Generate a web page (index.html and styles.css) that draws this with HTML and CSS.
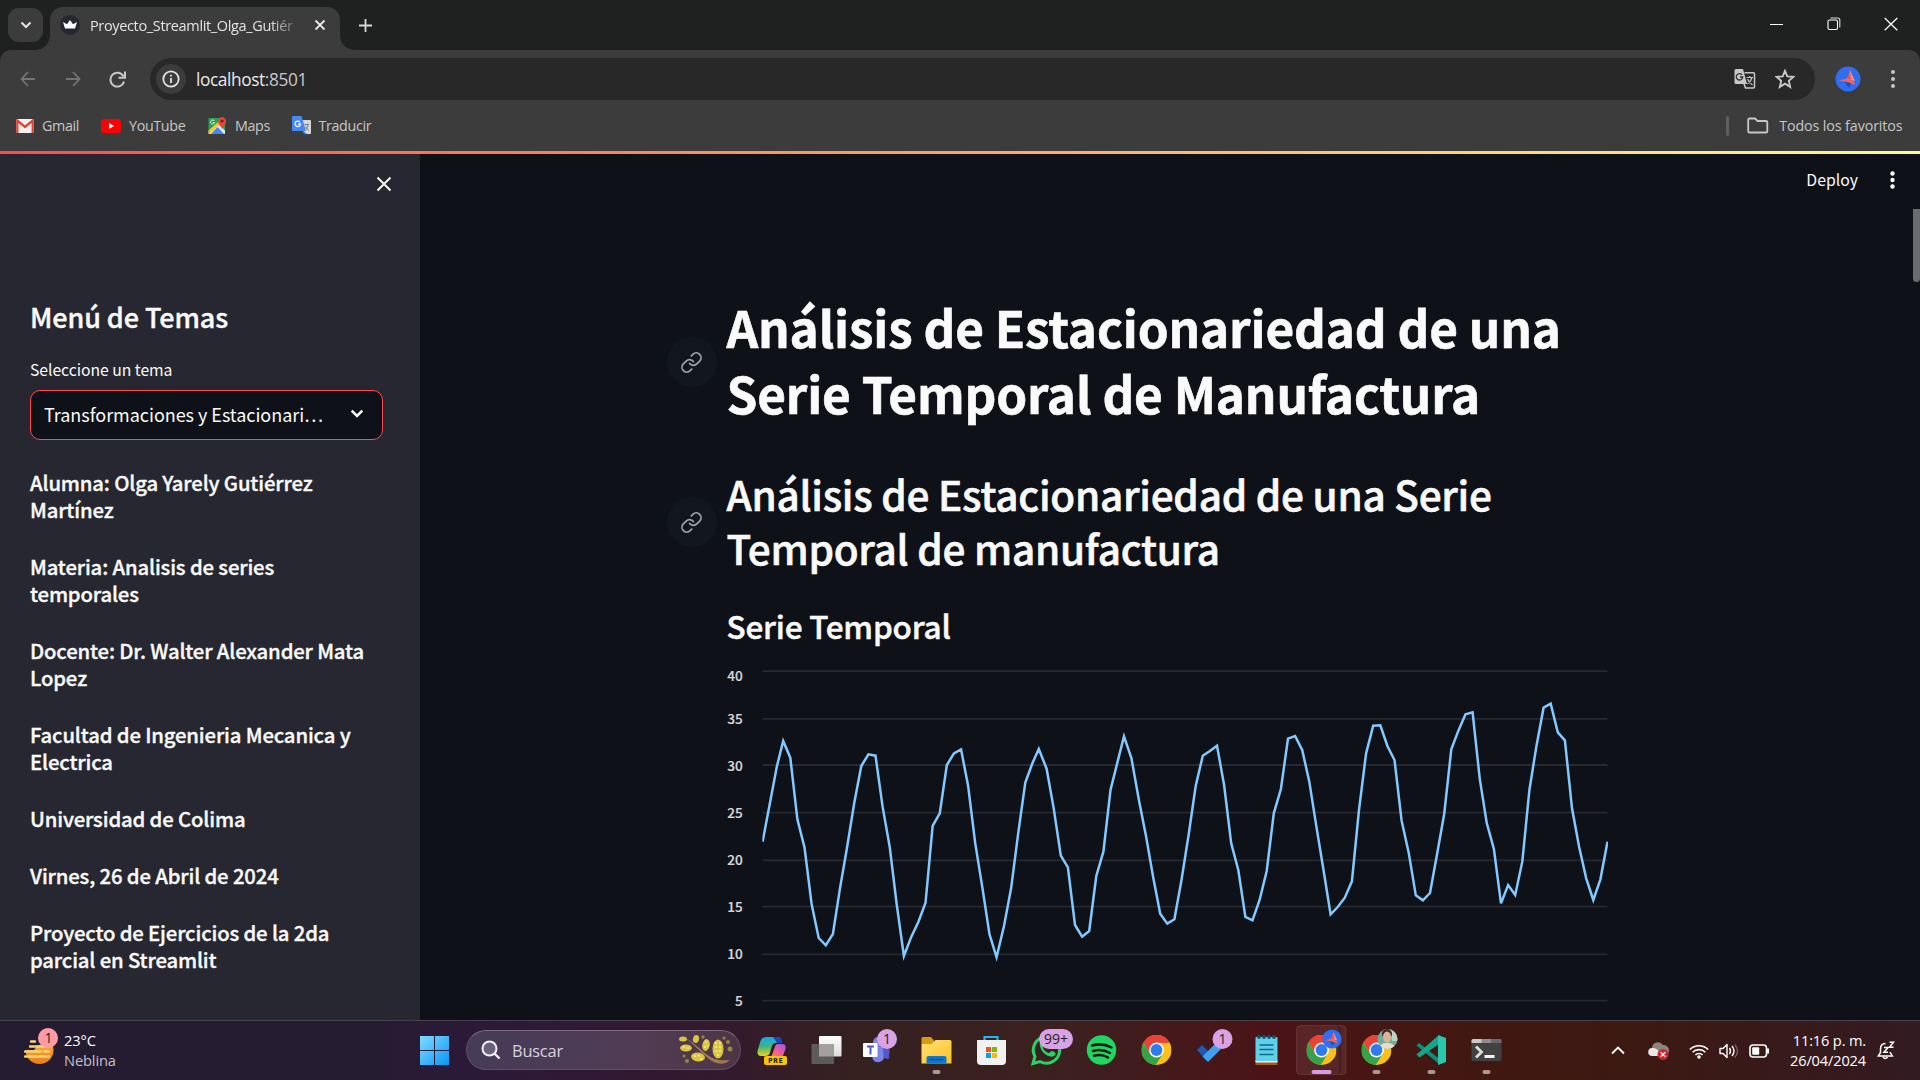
FILE: index.html
```html
<!DOCTYPE html>
<html lang="es">
<head>
<meta charset="utf-8">
<title>Proyecto_Streamlit_Olga_Gutiérrez</title>
<link rel="stylesheet" href="styles.css">
</head>
<body>
<svg width="0" height="0" class="defs" aria-hidden="true">
  <defs>
    <symbol id="chrome" viewBox="0 0 30 30">
      <circle cx="15" cy="15" r="15" fill="#fbc116"/>
      <path d="M15 15L2 7.500A15 15 0 0 1 28 7.500L15 7.700z" fill="#ea4335"/>
      <path d="M2 7.500A15 15 0 0 0 14.200 30L21.300 18.800L8.700 18.800z" fill="#34a349"/>
      <path d="M2 7.500L8.700 18.800L12 10.500L15 7.700H28A15 15 0 0 0 2 7.500z" fill="#ea4335"/>
      <circle cx="15" cy="15" r="7.400" fill="#fff"/>
      <circle cx="15" cy="15" r="5.900" fill="#2f7bee"/>
    </symbol>
    <symbol id="bird" viewBox="0 0 26 26">
      <circle cx="13" cy="13" r="12.500" fill="#2f6df2"/>
      <path d="M9 15l5 7 2-5z" fill="#1d4db5"/>
      <path d="M15 4l5 11-8-1.500z" fill="#ff8a80"/>
      <path d="M4 14.500l8-2 7 3 1 3.500-6-2.500z" fill="#f2645a"/>
      <path d="M12 12.500L15 4l1 10z" fill="#e4574f"/>
    </symbol>
    <symbol id="link" viewBox="0 0 24 24">
      <path d="M10 13a5 5 0 0 0 7.540.54l3-3a5 5 0 0 0-7.070-7.070l-1.720 1.710M14 11a5 5 0 0 0-7.540-.54l-3 3a5 5 0 0 0 7.070 7.070l1.710-1.710" fill="none" stroke="currentColor" stroke-width="1.800" stroke-linecap="round" stroke-linejoin="round"/>
    </symbol>
  </defs>
</svg>

<header class="browser">
  <div class="tabstrip">
    <div class="tab-search"><svg width="12" height="8" viewBox="0 0 12 8"><path d="M1.500 1.500L6 6l4.500-4.500" fill="none" stroke="#e3e3e3" stroke-width="2"/></svg></div>
    <div class="tab">
      <svg class="favicon" width="20" height="20" viewBox="0 0 20 20"><circle cx="10" cy="10" r="10" fill="#262730"/><path d="M3 7l4 2.200L10 5l3 4.200L17 7l-2 6.500H5z" fill="#fff"/></svg>
      <span class="tab-title">Proyecto_Streamlit_Olga_Gutiér</span>
      <svg class="tab-close" width="12" height="12" viewBox="0 0 12 12"><path d="M1.500 1.500l9 9M10.500 1.500l-9 9" stroke="#e8e8e8" stroke-width="1.800"/></svg>
    </div>
    <svg class="new-tab" width="13" height="13" viewBox="0 0 13 13"><path d="M6.500 0v13M0 6.500h13" stroke="#d8d8d8" stroke-width="1.800"/></svg>
    <div class="window-buttons">
      <svg width="14" height="14" viewBox="0 0 14 14"><path d="M0 7.500h13" stroke="#fff"/></svg>
      <svg width="14" height="14" viewBox="0 0 14 14"><rect x="1" y="3" width="9.500" height="9.500" rx="1.500" fill="none" stroke="#fff" stroke-width="1.100"/><path d="M3.500 1h7.300a2 2 0 0 1 2 2v7.500" fill="none" stroke="#ddd" stroke-width="1.100"/></svg>
      <svg width="14" height="14" viewBox="0 0 14 14"><path d="M.7 1l12.600 12.300M13.300 1L.7 13.300" stroke="#fff" stroke-width="1.200"/></svg>
    </div>
  </div>

  <div class="toolbar">
    <div class="nav">
      <svg width="16" height="16" viewBox="0 0 16 16"><path d="M15 8H2M8 1L1.500 8 8 15" fill="none" stroke="#747474" stroke-width="1.800"/></svg>
      <svg width="16" height="16" viewBox="0 0 16 16"><path d="M1 8h13M8 1l6.500 7L8 15" fill="none" stroke="#747474" stroke-width="1.800"/></svg>
      <svg width="17" height="17" viewBox="0 0 17 17"><path d="M14.500 5.500A6.900 6.900 0 1 0 15 10.500" fill="none" stroke="#c8c8c8" stroke-width="2"/><path d="M16 .5v6.200H9.500" fill="none" stroke="#c8c8c8" stroke-width="2"/></svg>
    </div>
    <div class="omnibox">
      <div class="site-info"><svg width="18" height="18" viewBox="0 0 18 18"><circle cx="9" cy="9" r="7.700" fill="none" stroke="#e3e3e3" stroke-width="1.800"/><path d="M9 8v5M9 4.800v1.700" stroke="#e3e3e3" stroke-width="1.800"/></svg></div>
      <span class="url">localhost<span class="port">:8501</span></span>
      <svg class="omni-translate" width="22" height="22" viewBox="0 0 22 22"><path d="M2 1h7l4 15H2a1.500 1.500 0 0 1-1.500-1.500v-12A1.500 1.500 0 0 1 2 1z" fill="#c7c7c7"/><path d="M8 6.800A3.200 3.200 0 1 0 8.700 9H6" fill="none" stroke="#333" stroke-width="1.300"/><path d="M10.500 4.800H19.500a1 1 0 0 1 1 1V19a1 1 0 0 1-1 1h-8l-1.500-4" fill="none" stroke="#c7c7c7" stroke-width="1.500"/><path d="M12.500 9.500H19M15.600 8v1.500M18 9.500c-.7 3-2.500 5-4.500 6.500M13.500 11c1 2.500 3 4.500 5 6" fill="none" stroke="#c7c7c7" stroke-width="1.200"/></svg>
      <svg class="star" width="20" height="20" viewBox="0 0 20 20"><path d="M10 1.800l2.300 5.600 6.100.5-4.600 4 1.400 6-5.200-3.200-5.200 3.200 1.400-6-4.600-4 6.100-.5z" fill="none" stroke="#c7c7c7" stroke-width="1.900"/></svg>
    </div>
    <svg class="avatar" width="26" height="26"><use href="#bird"/></svg>
    <svg class="menu-dots" width="4" height="20" viewBox="0 0 4 20"><g fill="#c7c7c7"><circle cx="2" cy="3" r="2"/><circle cx="2" cy="10" r="2"/><circle cx="2" cy="17" r="2"/></g></svg>
  </div>

  <div class="bookmarks">
    <div class="bookmark gmail"><svg width="18" height="14" viewBox="0 0 18 14"><rect width="18" height="14" rx="1.500" fill="#f1f1f1"/><path d="M1.300 14V1.500L9 8l7.700-6.500V14" fill="none" stroke="#dc4437" stroke-width="2.300"/></svg><span>Gmail</span></div>
    <div class="bookmark youtube"><svg width="20" height="14" viewBox="0 0 20 14"><rect width="20" height="14" rx="3.500" fill="#f00"/><path d="M8 4l5 3-5 3z" fill="#fff"/></svg><span>YouTube</span></div>
    <div class="bookmark maps"><svg width="19" height="19" viewBox="0 0 19 19"><path d="M1.500 2h15.500v16H1.500a1 1 0 0 1-1-1V3a1 1 0 0 1 1-1z" fill="#2b9f55"/><path d="M.5 17L10 7.500l7 7V17a1 1 0 0 1-1 1H1.500z" fill="#e8e8e8"/><path d="M3 18l6.500-7 6.500 7z" fill="#4285f4"/><path d="M.5 14.500L10 6l2 2L2 18l-1.500-.5z" fill="#fbc62d"/><path d="M6.300 5A2 2 0 1 0 6.500 6.500H5" fill="none" stroke="#e6f5ea"/><path d="M14 1a4.200 4.200 0 0 1 4 4.500c0 2.800-3.400 4.200-4 8.200-.6-4-4-5.400-4-8.200A4.200 4.200 0 0 1 14 1z" fill="#e8453c"/><circle cx="14" cy="5" r="1.600" fill="#7c1a15"/></svg><span>Maps</span></div>
    <div class="bookmark traducir"><svg width="19" height="19" viewBox="0 0 19 19"><path d="M8 4h10a1 1 0 0 1 1 1v12a1 1 0 0 1-1 1h-6z" fill="#d7d7d7"/><path d="M11 15l4 3.500-2.500.5z" fill="#2a56c6"/><path d="M1 0h8.500L14 15H1a1 1 0 0 1-1-1V1a1 1 0 0 1 1-1z" fill="#4688f4"/><path d="M8 6.300A2.700 2.700 0 1 0 8.500 8.200H6" fill="none" stroke="#fff" stroke-width="1.200"/><path d="M12.500 8.500H17M16 8.500c-.3 2-1.300 3.500-2.600 5M13.500 10.500l3 4" fill="none" stroke="#777"/></svg><span>Traducir</span></div>
    <div class="divider"></div>
    <div class="bookmark todos"><svg width="22" height="17" viewBox="0 0 22 17"><path d="M2.500 1.500h5.500l2.500 2.500h8.500a1.300 1.300 0 0 1 1.300 1.300v8.900a1.300 1.300 0 0 1-1.300 1.300H2.500a1.300 1.300 0 0 1-1.300-1.300V2.800a1.300 1.300 0 0 1 1.300-1.300z" fill="none" stroke="#c7c7c7" stroke-width="1.800"/></svg><span>Todos los favoritos</span></div>
  </div>
</header>

<div class="app">
  <div class="decoration"></div>
  <aside class="sidebar">
    <div class="sidebar-head"><svg width="16" height="16" viewBox="0 0 16 16"><path d="M1.500 1.500l13 13M14.500 1.500l-13 13" stroke="#fafafa" stroke-width="1.900"/></svg></div>
    <h2 class="menu-title">Menú de Temas</h2>
    <div class="field-label">Seleccione un tema</div>
    <div class="select"><span>Transformaciones y Estacionari…</span><svg width="14" height="10" viewBox="0 0 14 10"><path d="M1.700 1.700L7 7l5.300-5.300" fill="none" stroke="#fafafa" stroke-width="2.600"/></svg></div>
    <h5 class="info">Alumna: Olga Yarely Gutiérrez<br>Martínez</h5>
    <h5 class="info">Materia: Analisis de series<br>temporales</h5>
    <h5 class="info">Docente: Dr. Walter Alexander Mata<br>Lopez</h5>
    <h5 class="info">Facultad de Ingenieria Mecanica y<br>Electrica</h5>
    <h5 class="info">Universidad de Colima</h5>
    <h5 class="info">Virnes, 26 de Abril de 2024</h5>
    <h5 class="info">Proyecto de Ejercicios de la 2da<br>parcial en Streamlit</h5>
  </aside>

  <main class="main">
    <div class="main-head">
      <span class="deploy">Deploy</span>
      <svg width="5" height="18" viewBox="0 0 5 18"><g fill="#fff"><circle cx="2.500" cy="2.500" r="2.200"/><circle cx="2.500" cy="9" r="2.200"/><circle cx="2.500" cy="15.500" r="2.200"/></g></svg>
    </div>
    <div class="scroll-thumb"></div>
    <div class="block">
      <div class="heading title-row">
        <div class="anchor"><svg width="23" height="23"><use href="#link"/></svg></div>
        <h1>Análisis de Estacionariedad de una<br>Serie Temporal de Manufactura</h1>
      </div>
      <div class="heading header-row">
        <div class="anchor"><svg width="23" height="23"><use href="#link"/></svg></div>
        <h2>Análisis de Estacionariedad de una Serie<br>Temporal de manufactura</h2>
      </div>
      <h3>Serie Temporal</h3>
      <svg class="chart" width="890" height="370" viewBox="0 0 890 370">
        <g stroke="#262832" stroke-width="1.800">
          <path d="M35.500 21.200H880.500M35.500 68.900H880.500M35.500 115H880.500M35.500 162.700H880.500M35.500 210.300H880.500M35.500 256.700H880.500M35.500 304.300H880.500M35.500 350.700H880.500"/>
        </g>
        <g class="axis">
          <text x="15.700" y="31">40</text>
          <text x="15.700" y="73.500">35</text>
          <text x="15.700" y="120.500">30</text>
          <text x="15.700" y="167.700">25</text>
          <text x="15.700" y="214.700">20</text>
          <text x="15.700" y="262">15</text>
          <text x="15.700" y="309">10</text>
          <text x="15.700" y="356">5</text>
        </g>
        <svg x="35.300" y="0" width="845.700" height="370" overflow="hidden">
        <polyline transform="translate(0.300 0) scale(7.100 .33333)" vector-effect="non-scaling-stroke" fill="none" stroke="#83c9ff" stroke-width="2.500" points="0,575 1,463 2,350 2.900,273 3.900,323 4.900,508 5.900,592 6.900,762 7.900,864 8.900,886 9.900,852 10.900,715 11.900,592 12.900,460 13.900,348 14.900,313 15.900,317 16.900,470 17.900,590 18.900,765 19.900,918 20.950,860 21.950,815 22.950,758 23.950,528 24.950,490 25.950,345 26.950,310 27.950,298 28.950,408 29.950,580 30.950,712 31.950,852 32.950,922 34,828 35,715 36,550 37,398 38,340 38.900,297 40,356 41,475 42,617 43,652 44,825 45,860 46,843 47,678 48,605 49,420 50,335 50.900,259 51.950,325 53,450 54,558 55,680 56,791 57,821 58,808 59,690 60,555 61,408 62,317 63,303 64,287 65,405 66,580 67,660 68,801 69,811 70,750 71,663 72,490 73,417 74,266 75,258 76,300 77,395 78,530 79,660 80,793 81,771 82,743 83,694 84,480 85,310 86,227 87,226 88,288 89,330 90,512 91,608 92,736 93,751 94,729 95,612 96,492 97,298 98,242 99,193 100,187 101,385 102,520 103,597 104,760 105,705 106,735 107,635 108,420 109,287 110,173 111,161 112,247 113,271 114,475 115,590 116,685 117,750 118,688 119,575"/>
        </svg>
      </svg>
    </div>
  </main>
</div>

<footer class="taskbar">
  <div class="weather">
    <svg width="36" height="40" viewBox="0 0 36 40">
      <defs><linearGradient id="sun" x2="0" y2="1"><stop offset="0" stop-color="#f8c838"/><stop offset="1" stop-color="#f07a18"/></linearGradient></defs>
      <circle cx="15.500" cy="22" r="14" fill="url(#sun)"/>
      <path d="M0 0h36v17H14l-4 5H0z" fill="#251c31"/>
      <path d="M7 13.500h4M6 18.500h17M1 23.500h16M20 23.500h5M1 28.500h24" stroke="#f4d27c" stroke-width="2.400" stroke-linecap="round"/>
      <circle cx="24" cy="10" r="10" fill="#ff9ba3"/>
      <text x="24.500" y="15" font-size="14" fill="#222" text-anchor="middle">1</text>
    </svg>
    <div class="weather-text"><span class="temp">23°C</span><span class="cond">Neblina</span></div>
  </div>

  <div class="dock">
    <svg class="dock-item" viewBox="0 0 55 60"><defs><linearGradient id="win" x2="1" y2="1"><stop offset="0" stop-color="#7fdcff"/><stop offset="1" stop-color="#0a94f5"/></linearGradient></defs><path d="M13 16h14v14H13zM28 16h14v14H28zM13 31h14v14H13zM28 31h14v14H28z" fill="url(#win)"/></svg>
    <div class="search">
      <svg width="20" height="20" viewBox="0 0 20 20"><circle cx="8.500" cy="8.500" r="7" fill="#67617a" stroke="#f3f0f5" stroke-width="2"/><path d="M13.500 13.500l5 5" stroke="#f3f0f5" stroke-width="2.400"/></svg>
      <span>Buscar</span>
      <svg class="branch" width="54" height="32" viewBox="0 0 54 32">
        <g fill="#d9c443"><ellipse cx="4" cy="5" rx="4" ry="2.500"/><ellipse cx="17" cy="5" rx="3" ry="4" transform="rotate(15 17 5)"/><ellipse cx="7" cy="14" rx="6" ry="3.500"/><ellipse cx="27" cy="11" rx="3.700" ry="6" transform="rotate(12 27 11)"/><ellipse cx="39" cy="15" rx="5.500" ry="9.500"/><ellipse cx="19" cy="23" rx="7" ry="4.500" transform="rotate(8 19 23)"/></g>
        <g fill="#f0e174"><circle cx="37" cy="9" r="1.300"/><circle cx="41" cy="9" r="1.200"/><circle cx="41" cy="13" r="1.300"/><circle cx="37" cy="13" r="1.300"/><circle cx="37" cy="17" r="1.300"/><circle cx="41" cy="17" r="1.300"/><circle cx="39" cy="21" r="1.300"/><circle cx="16" cy="22" r="1.300"/><circle cx="20" cy="21.500" r="1.300"/><circle cx="22" cy="25" r="1.300"/><circle cx="5" cy="13" r="1.200"/><circle cx="9" cy="14" r="1.200"/><circle cx="27" cy="8" r="1.200"/><circle cx="26" cy="13" r="1.200"/><circle cx="29" cy="12" r="1"/></g>
        <path d="M5 3C14 8 20 14 27 20c8 6 14 7 24 6-5 5-14 5-21-1C22 19 15 10 5 3z" fill="#a57855"/>
        <g fill="#97873a"><circle cx="24" cy="3" r="1.700"/><circle cx="45" cy="4" r="1.500"/><circle cx="49" cy="8" r="2"/><circle cx="51" cy="15" r="2.500"/><circle cx="5" cy="22" r="1.500"/><circle cx="8" cy="27" r="2"/></g>
      </svg>
    </div>
    <svg class="dock-item" viewBox="0 0 55 60"><defs><linearGradient id="cpa" x2="0" y2="1"><stop offset="0" stop-color="#18a5f2"/><stop offset=".5" stop-color="#40b47c"/><stop offset="1" stop-color="#e8d421"/></linearGradient><linearGradient id="cpb" x1="1" x2="0" y2="1"><stop offset="0" stop-color="#9a55f0"/><stop offset=".5" stop-color="#ec5aa0"/><stop offset="1" stop-color="#fb8a45"/></linearGradient></defs><path d="M22 17h12q2 0 2.800 2l1.200 4h-6q-3 0-4 3l-2.500 8Q24.500 36 21 36h-4q-4 0-3.500-5l3-10Q18 17 22 17z" fill="url(#cpa)"/><path d="M29 17h5q2 0 2.800 2l1.200 4h-5z" fill="#1747b8"/><path d="M33 24h5q4.500 0 3.500 5l-3 8H26.500l1.500-2 3-8.500q.5-2 2-2.500z" fill="url(#cpb)"/><rect x="20" y="36" width="23" height="9" rx="2" fill="#ffc400"/><text x="31.600" y="43.400" font-size="7.500" font-weight="700" fill="#222" text-anchor="middle" letter-spacing=".5">PRE</text></svg>
    <svg class="dock-item" viewBox="0 0 55 60"><defs><linearGradient id="tv" x2="0" y2="1"><stop offset="0" stop-color="#fff"/><stop offset="1" stop-color="#dcdcdc"/></linearGradient></defs><rect x="20" y="16" width="22.500" height="20.500" rx="1" fill="url(#tv)"/><rect x="12.500" y="24" width="22.500" height="20" rx="1" fill="#5d5b5a"/><path d="M20 24h15v12.500H20z" fill="#a3a1a0"/></svg>
    <svg class="dock-item" viewBox="0 0 55 60"><circle cx="24" cy="22" r="5" fill="#7b83eb"/><path d="M28 26h7v12.500a6 6 0 0 1-5-1z" fill="#5059c9"/><path d="M18 26.500h12v9a6 6 0 0 1-11.500 3z" fill="#7b83eb"/><path d="M29 28h6.500v5a5 5 0 0 1-6 4.500z" fill="#5059c9"/><rect x="9" y="23" width="14.500" height="14" rx="1" fill="#fff"/><path d="M13 26.500h7M16.500 26.500v8" stroke="#5059c9" stroke-width="2"/><circle cx="33" cy="19" r="10" fill="#d9a2e4"/><text x="33" y="24" font-size="14" text-anchor="middle" fill="#222">1</text></svg>
    <svg class="dock-item" viewBox="0 0 55 60"><defs><linearGradient id="fold" x2="1" y2="1"><stop offset="0" stop-color="#ffe070"/><stop offset="1" stop-color="#fcc42c"/></linearGradient></defs><path d="M12.500 24V18.500q0-1.500 1.500-1.500h8l3 3.500v4z" fill="#d99a0e"/><path d="M12.500 24h10l4-4H41q1.500 0 1.500 1.500V43.500h-30z" fill="url(#fold)"/><path d="M17.500 43.500V38q0-2 2-2h16q2 0 2 2v5.500z" fill="#0f78c8"/><path d="M20.500 39.500h14" stroke="#0b4c8a" stroke-width="1.500"/><rect x="23.500" y="50" width="8" height="4" rx="2" fill="#a39a9a"/></svg>
    <svg class="dock-item" viewBox="0 0 55 60"><path d="M20.500 21v-4h13v4" fill="none" stroke="#28b2f0" stroke-width="2.200"/><path d="M13 20h29v21q0 4-4 4H17q-4 0-4-4z" fill="#f1f1f1"/><path d="M22 27h5v5h-5z" fill="#f25022"/><path d="M28 27h5v5h-5z" fill="#7fba00"/><path d="M22 33h5v5h-5z" fill="#00a4ef"/><path d="M28 33h5v5h-5z" fill="#ffb900"/></svg>
    <svg class="dock-item" viewBox="0 0 55 60"><path d="M14 43.500l2-7a13.200 13.200 0 1 1 5 5z" fill="none" stroke="#25d366" stroke-width="3"/><path d="M21 22c2-2 3 0 4 3 .3 1.500-1.500 2-1 3 1.500 3 4 4.500 6 5 1 0 1.500-2 3-2 5 2 4 3 2 5-5 3-16-5-14-14z" fill="#25d366"/><rect x="20" y="9" width="34" height="20" rx="10" fill="#d9a2e4"/><text x="37" y="24" font-size="14" text-anchor="middle" fill="#222">99+</text></svg>
    <svg class="dock-item" viewBox="0 0 55 60"><circle cx="27.500" cy="30" r="14.700" fill="#1fd760"/><path d="M18 25.500q10-3 19.500 2M19 31q9-2.500 17 2M20 35.800q8-2 14 1.700" fill="none" stroke="#0d1b12" stroke-width="2.500" stroke-linecap="round"/></svg>
    <svg class="dock-item" viewBox="0 0 55 60"><use href="#chrome" x="12.500" y="15" width="30" height="30"/></svg>
    <svg class="dock-item" viewBox="0 0 55 60"><path d="M13 30l5-5 11 11-5.500 5.500z" fill="#195abd"/><path d="M18.500 36.500L39 16l5.500 5.500L24 42z" fill="#3fa0ee"/><circle cx="38.500" cy="19" r="10" fill="#d9a2e4"/><text x="38.500" y="24" font-size="14" text-anchor="middle" fill="#222">1</text></svg>
    <svg class="dock-item" viewBox="0 0 55 60"><path d="M16.500 40h22v5h-22z" fill="#a8571c"/><path d="M16.500 40h22v2.500h-22z" fill="#f3f3f3"/><rect x="16.500" y="17" width="22" height="24" rx="1" fill="#5fd0ec"/><path d="M20.500 25h14M20.500 29.500h14M20.500 34.500h14" stroke="#0b6a8a" stroke-width="1.700"/><g fill="#0c5873"><circle cx="20" cy="17" r="1.900"/><circle cx="25" cy="17" r="1.900"/><circle cx="30" cy="17" r="1.900"/><circle cx="35" cy="17" r="1.900"/></g></svg>
    <svg class="dock-item" viewBox="0 0 55 60"><rect x="2.500" y="5.500" width="49.500" height="49" rx="4" fill="#fff" fill-opacity=".08" stroke="#fff" stroke-opacity=".1"/><path d="M43 5.500q3 1 3 5V50q0 3-3 4.500" fill="none" stroke="#2b0d12" stroke-opacity=".7"/><use href="#chrome" x="12.500" y="15" width="30" height="30"/><use href="#bird" x="28" y="9" width="20" height="20"/><rect x="17.500" y="50" width="20" height="4" rx="2" fill="#d79be6"/></svg>
    <svg class="dock-item" viewBox="0 0 55 60"><use href="#chrome" x="12.500" y="15" width="30" height="30"/><defs><clipPath id="face"><circle cx="38.500" cy="19" r="10"/></clipPath></defs><g clip-path="url(#face)"><path d="M28 9h21v21H28z" fill="#6cae9a"/><path d="M41 9h8v12h-6z" fill="#b9d3c6"/><circle cx="38" cy="14" r="5" fill="#3c2a25"/><ellipse cx="38" cy="17" rx="4" ry="5.500" fill="#e0b296"/><path d="M30 30q1-8 8-7 7-1 9 7z" fill="#e8dccf"/></g><rect x="23.500" y="50" width="8" height="4" rx="2" fill="#ac9595"/></svg>
    <svg class="dock-item" viewBox="0 0 55 60"><path d="M12.500 25.500L15 23l20 15.500V44z" fill="#0b8f78"/><path d="M12.500 34.500L35 15v9L15.500 37.500z" fill="#12a78c"/><path d="M34 15l8 3v24l-8 3z" fill="#2bc7ab"/><rect x="23.500" y="50" width="8" height="4" rx="2" fill="#ac9595"/></svg>
    <svg class="dock-item" viewBox="0 0 55 60"><rect x="12.500" y="19" width="30" height="22" rx="1.500" fill="#424242"/><path d="M12.500 23v-2.500q0-1.500 1.500-1.500h9v4z" fill="#c9c9c9"/><path d="M22.500 19h10v4h-10z" fill="#8e8e8e"/><path d="M32.500 19H41q1.500 0 1.500 1.500V23h-10z" fill="#6a6a6a"/><path d="M17 26.500l5.500 5.500-5.500 5.500" fill="none" stroke="#dedede" stroke-width="2.800"/><path d="M25.500 36.500h10" stroke="#f2f2f2" stroke-width="3"/><rect x="23.500" y="50" width="8" height="4" rx="2" fill="#ac9595"/></svg>
  </div>

  <div class="tray">
    <svg width="14" height="9" viewBox="0 0 14 9"><path d="M1 7.500L7 1.500l6 6" fill="none" stroke="#fff" stroke-width="1.900"/></svg>
    <svg class="cloud" width="21" height="18" viewBox="0 0 21 18"><path d="M4 14a4 4 0 0 1 0-8 6 6 0 0 1 11-3 5 5 0 0 1 1 11z" fill="#8d8480"/><path d="M4 14a4 4 0 0 1 1-8q4 0 7 5l2 3z" fill="#ece8e6"/><circle cx="15" cy="12.500" r="5.500" fill="#d5222a"/><path d="M12.700 10.200l4.600 4.600M17.300 10.200l-4.600 4.600" stroke="#fff" stroke-width="1.400"/></svg>
    <svg class="wifi" width="20" height="16" viewBox="0 0 20 16"><g fill="none" stroke="#fff" stroke-width="1.600"><path d="M.8 6.500a13 13 0 0 1 18.400 0"/><path d="M3.600 9.300a9 9 0 0 1 12.800 0"/><path d="M6.400 12a5 5 0 0 1 7.200 0"/></g><circle cx="10" cy="14" r="1.800" fill="#fff"/></svg>
    <svg class="volume" width="20" height="16" viewBox="0 0 20 16"><path d="M1 5.500h3L8 1.500v13L4 10.500H1z" fill="none" stroke="#fff" stroke-width="1.400" stroke-linejoin="round"/><path d="M10.500 5q2 3 0 6M13 3q4 5 0 10" fill="none" stroke="#fff" stroke-width="1.400"/><path d="M15.800 1.500q5.500 6.500 0 13" fill="none" stroke="#7c6562" stroke-width="1.300"/></svg>
    <svg class="battery" width="21" height="14" viewBox="0 0 21 14"><rect x="1" y="1" width="16.500" height="12" rx="3" fill="none" stroke="#fff" stroke-width="1.600"/><rect x="3.200" y="3.200" width="7" height="7.600" rx="1" fill="#fff"/><path d="M19 4.500v5" stroke="#fff" stroke-width="2"/></svg>
    <div class="clock"><span class="time">11:16 p. m.</span><span class="date">26/04/2024</span></div>
    <svg class="bell" width="18" height="19" viewBox="0 0 18 19"><path d="M8.500 2.500C5 2.500 3.500 5 3.500 8v3.500L1.300 15h14l-2-3.500V11" fill="none" stroke="#fff" stroke-width="1.500"/><path d="M6 16q2.300 3 4.500 0" fill="none" stroke="#fff" stroke-width="1.500"/><path d="M12.500 1.200h4l-4 5h4M7 6.500h4l-4 4.700h4" fill="none" stroke="#fff" stroke-width="1.500"/></svg>
  </div>
</footer>
</body>
</html>
```
FILE: styles.css
```css
* { box-sizing: border-box; }
body {
  margin: 0;
  width: 1920px;
  height: 1080px;
  overflow: hidden;
  display: flex;
  flex-direction: column;
  background: #0e1117;
  font-family: "Open Sans", "Noto Sans", sans-serif;
}
svg { display: block; flex: none; }
.defs { position: absolute; }
h1, h2, h3, h5 { margin: 0; white-space: nowrap; }

/* Browser chrome */
.browser { height: 151px; background: #1f2120; display: flex; flex-direction: column; flex: none; }
.tabstrip { height: 50px; display: flex; align-items: flex-start; padding-left: 8px; }
.tab-search {
  width: 35px; height: 34px; margin-top: 8px; border-radius: 11px;
  background: #3c3c3c; display: flex; align-items: center; justify-content: center;
}
.tab {
  position: relative; width: 290px; height: 43px; margin: 7px 0 0 7px; padding: 0 14px 7px 10px;
  background: #3c3c3c; border-radius: 13px 13px 0 0; display: flex; align-items: center;
}
.tab::before, .tab::after { content: ""; position: absolute; bottom: 0; width: 14px; height: 14px; }
.tab::before { left: -14px; background: radial-gradient(circle at 0 0, transparent 13.5px, #3c3c3c 14px); }
.tab::after { right: -14px; background: radial-gradient(circle at 100% 0, transparent 13.5px, #3c3c3c 14px); }
.tab-title {
  width: 212px; margin-left: 10px; white-space: nowrap;
  font-size: 14.5px; letter-spacing: -0.35px; color: #e3e3e3;
  -webkit-mask-image: linear-gradient(90deg, #000 180px, transparent 212px);
  mask-image: linear-gradient(90deg, #000 180px, transparent 212px);
}
.tab-close { margin-left: auto; }
.new-tab { margin: 19px 0 0 19px; }
.window-buttons { margin: 17px 22px 0 auto; display: flex; gap: 43px; }

.toolbar { height: 56px; background: #3c3c3c; border-radius: 11px 11px 0 0; display: flex; align-items: center; padding-top: 2px; }
.nav { width: 150px; padding-left: 20px; display: flex; align-items: center; gap: 28.5px; }
.omnibox { width: 1665px; height: 42px; border-radius: 21px; background: #282828; display: flex; align-items: center; padding: 0 20px 0 6px; }
.site-info { width: 30px; height: 30px; border-radius: 50%; background: #3c3c3c; display: flex; align-items: center; justify-content: center; }
.url { margin-left: 10px; font-size: 17.3px; letter-spacing: -0.4px; color: #e8e8e8; }
.port { color: #c7c7c7; }
.omni-translate { margin-left: auto; }
.star { margin-left: 19px; }
.avatar { margin-left: 19.5px; }
.menu-dots { margin-left: 30.5px; }

.bookmarks { height: 45px; background: #3c3c3c; display: flex; align-items: center; padding: 0 17.5px 6px 16px; color: #c7c7c7; font-size: 14.3px; }
.bookmark { display: flex; align-items: center; gap: 8px; white-space: nowrap; }
.bookmark span { letter-spacing: -0.35px; }
.gmail { width: 85px; }
.youtube { width: 107px; }
.maps { width: 83.5px; }
.divider { width: 3px; height: 20px; border-radius: 2px; background: #5f5f5f; margin-left: auto; }
.todos { margin-left: 18px; gap: 10px; }
.todos span { letter-spacing: -0.12px; }

/* App */
.app {
  position: relative; height: 869px; flex: none; display: flex; overflow: hidden; color: #fafafa;
  font-family: "Noto Sans CJK SC", "Noto Sans", sans-serif;
}
.decoration { position: absolute; left: 0; top: 0; width: 100%; height: 3px; z-index: 2; background: linear-gradient(90deg, #ff4b4b, #fffd80); }
.sidebar { width: 420px; height: 869px; background: #262730; padding: 0 37px 0 30px; }
.sidebar-head { height: 148px; display: flex; justify-content: flex-end; margin-right: -9px; padding: 25px 0 0; }
.menu-title { font-size: 27px; line-height: 36px; font-weight: 500; letter-spacing: -0.1px; -webkit-text-stroke: 0.4px #fafafa; }
.field-label { font-size: 15.75px; line-height: 24px; margin-top: 23px; letter-spacing: -0.05px; }
.select {
  width: 353px; height: 50px; margin: 8px 0 29px; border: 1px solid #ff4b4b; border-radius: 10px;
  background: #0e1117; display: flex; align-items: center; justify-content: space-between;
  padding: 0 18px 2px 13px; font-size: 18px; letter-spacing: -0.04px; white-space: nowrap;
}
.info { font-size: 20.3px; line-height: 27px; font-weight: 500; margin-bottom: 30px; letter-spacing: -0.14px; -webkit-text-stroke: 0.35px #fafafa; }

.main { position: relative; width: 1500px; height: 869px; }
.main-head { height: 75px; padding: 0 25px 18px 0; display: flex; justify-content: flex-end; align-items: center; gap: 32px; font-size: 15.8px; }
.scroll-thumb { position: absolute; right: 0; top: 58px; width: 7px; height: 73px; border-radius: 0 0 4px 4px; background: #6b6c70; }
.block { width: 880px; margin: 68px 0 0 306.5px; }
.heading { position: relative; }
.anchor {
  position: absolute; left: -60px; width: 50px; height: 50px; border-radius: 50%;
  background: #12161e; color: #a3a4a7; display: flex; align-items: center; justify-content: center;
}
.title-row .anchor { top: 43px; }
.header-row .anchor { top: 30px; }
h1 { font-size: 49.5px; line-height: 66px; font-weight: 700; letter-spacing: -0.18px; -webkit-text-stroke: 0.6px #fafafa; }
.header-row { margin-top: 41px; }
.header-row h2 { font-size: 40.5px; line-height: 54px; font-weight: 500; letter-spacing: -0.26px; -webkit-text-stroke: 0.6px #fafafa; }
h3 { font-size: 31.5px; line-height: 42px; font-weight: 500; letter-spacing: -0.2px; margin-top: 29px; -webkit-text-stroke: 0.5px #fafafa; }
.chart { margin-top: 4px; }
.axis { font-size: 13.6px; fill: #d5d6da; text-anchor: end; font-weight: 500; stroke: #d5d6da; stroke-width: 0.2px; }

/* Taskbar */
.taskbar {
  height: 60px; flex: none; display: flex; align-items: center; border-top: 1px solid #4b4450;
  background: linear-gradient(90deg, #251c31 0, #251c31 380px, #2c1939 480px, #34192f 700px, #35211f 860px, #3c2020 1060px, #4b1317 1270px, #421811 1450px, #3c1913 1650px, #371a1b 1800px, #321b22 1920px);
}
.weather { width: 406.5px; flex: none; padding-left: 24px; display: flex; align-items: center; gap: 4px; }
.weather svg { margin-bottom: 6px; }
.weather-text { display: flex; flex-direction: column; line-height: 20px; font-size: 14.7px; letter-spacing: -0.15px; color: #fff; margin-bottom: 2px; }
.cond { color: #c4bfc9; }
.dock { display: flex; align-items: center; flex: none; margin-top: -1px; }
.dock-item { width: 55px; height: 60px; }
.search {
  width: 275px; height: 40px; margin: 0 2.5px 0 4.5px; border-radius: 20px; display: flex; align-items: center;
  background: linear-gradient(90deg, #453b58, #503c54 60%, #4d3545); border: 1px solid #5e4f68; border-top-color: #7d6c82;
  padding: 0 7px 0 14px; color: #d8d2dc; font-size: 16.4px; letter-spacing: -0.2px;
}
.search span { margin-left: 11px; }
.branch { margin-left: auto; }
.tray { flex: 1; display: flex; align-items: center; padding-left: 97px; }
.cloud { margin-left: 23px; }
.wifi { margin-left: 20px; }
.volume { margin-left: 10px; }
.battery { margin-left: 10px; }
.clock { display: flex; flex-direction: column; align-items: flex-end; line-height: 20px; font-size: 14.6px; letter-spacing: -0.15px; color: #fff; margin-left: auto; margin-bottom: 2px; white-space: nowrap; }
.bell { margin: 0 25px 0 11px; }
```
